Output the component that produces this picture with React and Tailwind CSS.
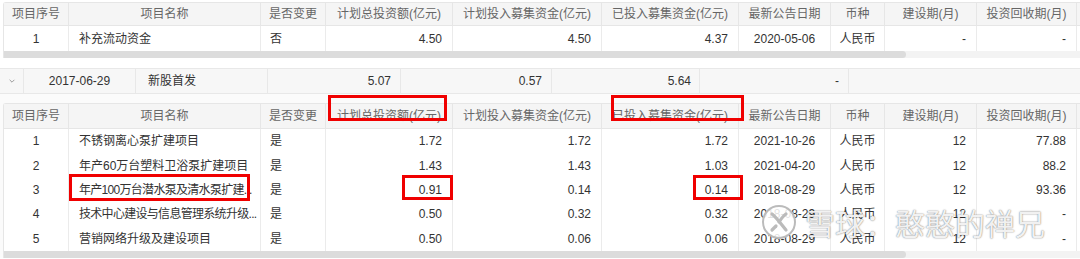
import React from 'react';

const topHeaders = ['项目序号', '项目名称', '是否变更', '计划总投资额(亿元)', '计划投入募集资金(亿元)', '已投入募集资金(亿元)', '最新公告日期', '币种', '建设期(月)', '投资回收期(月)', ''];

const topRows = [
  ['1', '补充流动资金', '否', '4.50', '4.50', '4.37', '2020-05-06', '人民币', '-', '-', ''],
];

const subRows = [
  ['1', '不锈钢离心泵扩建项目', '是', '1.72', '1.72', '1.72', '2021-10-26', '人民币', '12', '77.88', ''],
  ['2', '年产60万台塑料卫浴泵扩建项目', '是', '1.43', '1.43', '1.03', '2021-04-20', '人民币', '12', '88.2', ''],
  ['3', '年产100万台潜水泵及清水泵扩建...', '是', '0.91', '0.14', '0.14', '2018-08-29', '人民币', '12', '93.36', ''],
  ['4', '技术中心建设与信息管理系统升级...', '是', '0.50', '0.32', '0.32', '2018-08-29', '人民币', '12', '-', ''],
  ['5', '营销网络升级及建设项目', '是', '0.50', '0.06', '0.06', '2018-08-29', '人民币', '12', '-', ''],
];

// per-column alignment for body cells
const align = ['justify-center', 'justify-start pl-[10px]', 'justify-start pl-[9px]', 'justify-end pr-[10px]', 'justify-end pr-[10px]', 'justify-end pr-[10px]', 'justify-center', 'justify-center', 'justify-end pr-[10px]', 'justify-end pr-[10px]', ''];

const gridCols = 'grid grid-cols-[65px_192px_65px_127px_149px_137px_92px_54px_92px_100px_120px]';

const HeaderRow = ({ height }) => (
  <div className={`${gridCols} bg-[#f5f5f5] border-b border-[#e6e6e6] ${height}`}>
    {topHeaders.map((h, i) => (
      <div key={i} className="flex items-center justify-center border-r border-[#e6e6e6] text-[#666] whitespace-nowrap">
        {h}
      </div>
    ))}
  </div>
);

const BodyRow = ({ row, height }) => (
  <div className={`${gridCols} bg-white ${height}`}>
    {row.map((c, i) => (
      <div
        key={i}
        className={`flex items-center border-r border-[#ebebeb] text-[#333] whitespace-nowrap overflow-hidden ${align[i]} ${
          c.endsWith('...') ? 'tracking-[-0.7px]' : ''
        }`}
      >
        {c}
      </div>
    ))}
  </div>
);

const Scrollbar = () => (
  <div className="h-[7px] bg-[#f3f3f3]">
    <div className="h-full w-[902px] rounded-r-full rounded-l-[3px] bg-[#dcdcdc]" />
  </div>
);

const RedBox = ({ className }) => (
  <div className={`absolute border-[3px] border-[#f00000] ${className}`} />
);

const App = () => {
  return (
    <div className="relative w-[1080px] h-[259px] overflow-hidden bg-white text-[12px] font-[Liberation_Sans,Noto_Sans_CJK_SC,sans-serif]">
      {/* Top table */}
      <div className="pt-[2px] pl-[3px]">
        <div className="border-l border-t border-[#e6e6e6] rounded-tl-[3px]">
          <HeaderRow height="h-[23px]" />
          {topRows.map((r, i) => (
            <BodyRow key={i} row={r} height="h-[25px]" />
          ))}
          <Scrollbar />
        </div>
      </div>

      {/* Outer summary row */}
      <div className="mt-[10px] flex h-[26px] bg-[#f7f7f7] border-y border-[#e8e8e8] text-[#333]">
        <div className="w-[24px] flex items-center justify-center border-r border-[#e8e8e8]">
          <svg className="w-[8px] h-[8px] text-[#999]" viewBox="0 0 10 10" fill="none" stroke="currentColor" strokeWidth="1.2">
            <path d="M2 3.5l3 3 3-3" />
          </svg>
        </div>
        <div className="w-[112px] flex items-center justify-center border-r border-[#e8e8e8]">2017-06-29</div>
        <div className="w-[132px] flex items-center pl-[12px] border-r border-[#e8e8e8]">新股首发</div>
        <div className="w-[133px] flex items-center justify-end pr-[9px] border-r border-[#e8e8e8]">5.07</div>
        <div className="w-[151px] flex items-center justify-end pr-[9px] border-r border-[#e8e8e8]">0.57</div>
        <div className="w-[148px] flex items-center justify-end pr-[8px] border-r border-[#e8e8e8]">5.64</div>
        <div className="w-[149px] flex items-center justify-end pr-[9px] border-r border-[#e8e8e8]">-</div>
        <div className="flex-1" />
      </div>

      {/* Expanded sub table */}
      <div className="bg-[#fbfbfb] pt-[9px] pl-[3px]">
        <div className="border-l border-t border-[#e6e6e6] rounded-tl-[3px]">
          <HeaderRow height="h-[25px]" />
          {subRows.map((r, i) => (
            <BodyRow key={i} row={r} height="h-[24.4px]" />
          ))}
          <Scrollbar />
        </div>
      </div>

      {/* Annotations */}
      <RedBox className="left-[328px] top-[95px] w-[119px] h-[26px]" />
      <RedBox className="left-[611px] top-[95px] w-[133px] h-[26px]" />
      <RedBox className="left-[69px] top-[174px] w-[181px] h-[27px]" />
      <RedBox className="left-[402px] top-[175px] w-[51px] h-[25px]" />
      <RedBox className="left-[693px] top-[175px] w-[50px] h-[25px]" />

      {/* Watermark */}
      <div className="absolute left-[761px] top-[204px] flex items-center gap-[8px] pointer-events-none">
        <svg className="w-[36px] h-[36px]" viewBox="0 0 36 36" fill="none">
          <circle cx="18" cy="18" r="16" fill="white" fillOpacity="0.85" stroke="#bbb" strokeWidth="2" />
          <path d="M11 10c5 4 9 10 14 16" stroke="#bbb" strokeWidth="3.2" strokeLinecap="round" />
          <path d="M25 10c-3 2-5 5-7 8" stroke="#bbb" strokeWidth="3.2" strokeLinecap="round" />
          <path d="M11 26c2-2 3-3 4-4" stroke="#bbb" strokeWidth="3.2" strokeLinecap="round" />
        </svg>
        <span className="text-[30px] leading-none text-white/90 font-[Noto_Sans_CJK_SC,sans-serif] [text-shadow:0_0_1px_rgba(0,0,0,0.45),0_0_2px_rgba(0,0,0,0.3)]">
          雪球：憨憨的禅兄
        </span>
      </div>
    </div>
  );
};

export default App;
